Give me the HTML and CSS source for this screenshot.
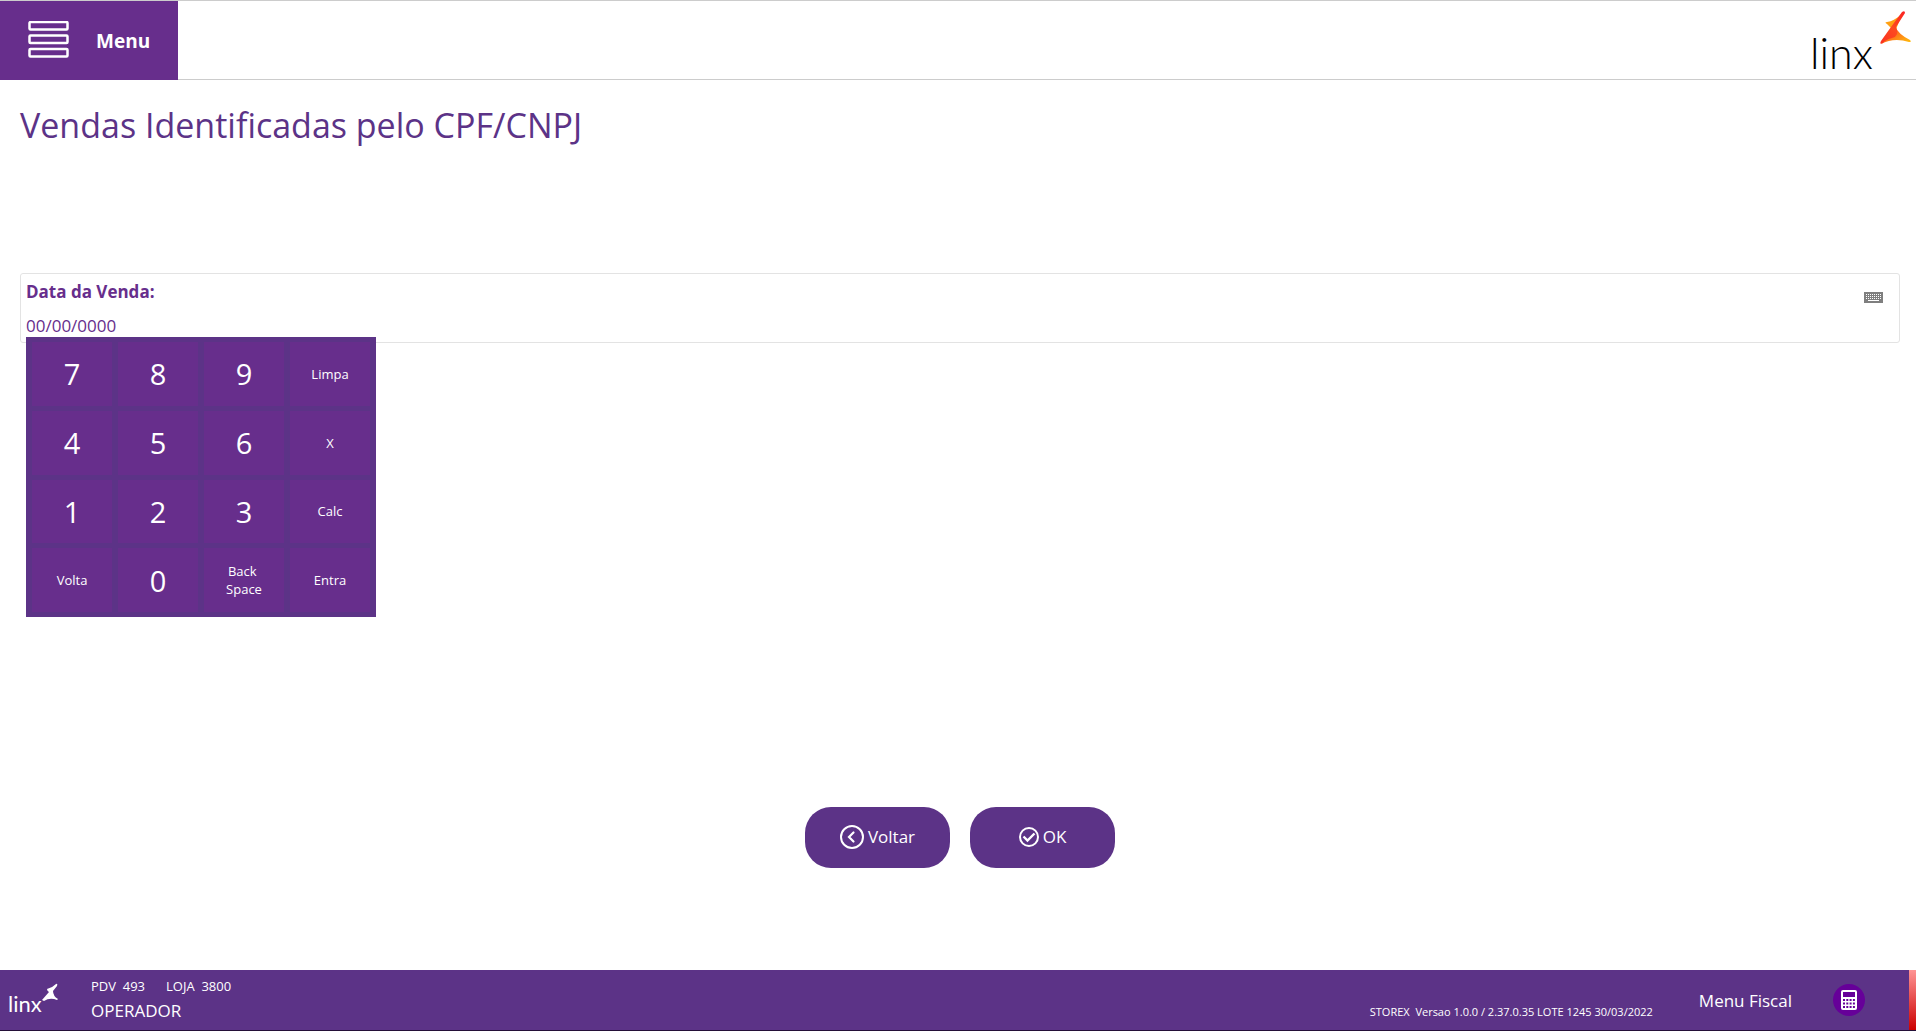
FILE: index.html
```html
<!DOCTYPE html>
<html lang="pt-BR">
<head>
<meta charset="utf-8">
<title>Vendas Identificadas pelo CPF/CNPJ</title>
<link rel="stylesheet" href="styles.css">
</head>
<body>
<header class="topbar">
  <button class="menu" type="button">
    <svg class="menu-icon" width="42" height="38" viewBox="0 0 42 38" fill="none" stroke="#fff" stroke-width="2.500" aria-hidden="true">
      <rect x="1.500" y="1" width="38" height="7.500" rx="1"/>
      <rect x="1.500" y="14.500" width="38" height="7.500" rx="1"/>
      <rect x="1.500" y="28" width="38" height="7.500" rx="1"/>
    </svg>
    <span>Menu</span>
  </button>
  <svg class="brand" width="106" height="72" viewBox="0 0 106 72" role="img" aria-label="Linx">
    <defs>
      <linearGradient id="wing" x1="0" y1="0" x2="1" y2="1"><stop offset=".3" stop-color="#fd5a20"/><stop offset="1" stop-color="#ffc60b"/></linearGradient>
      <linearGradient id="body" x1="1" y1="0" x2="0" y2="1"><stop offset="0" stop-color="#fb2222"/><stop offset=".5" stop-color="#fd4a20"/><stop offset="1" stop-color="#fb3020"/></linearGradient>
    </defs>
    <text class="brand-text" x="0" y="62">linx</text>
    <path d="M77 17 Q74 15 77 15 Q84 14 92 7 L85 25Z" fill="#ffa012"/>
    <path d="M85 19 Q88 27 100 33 Q102 35 99 35 Q84 30 71 37Z" fill="url(#wing)"/>
    <path d="M92 5 Q95 3 95 6 L86 20 Q90 29 82 31 Q75 33 73 36 Q69 38 71 34 L81 20Z" fill="url(#body)"/>
  </svg>
</header>

<main class="content">
  <h1 class="title">Vendas Identificadas pelo CPF/CNPJ</h1>
  <div class="field">
    <div class="field-main">
      <label class="field-label" for="data">Data da Venda:</label>
      <input class="field-input" id="data" type="text" value="00/00/0000">
    </div>
    <button class="keyboard" type="button" aria-label="Teclado">
      <svg width="19" height="11" viewBox="0 0 19 11" aria-hidden="true">
        <path fill="#7f7f7f" d="M0 0h19v11H0z"/>
        <path stroke="#fff" stroke-dasharray="1 1" d="M2 2.500h15M2 4.500h15M2 6.500h15"/>
        <path stroke="#fff" d="M4 8.500h11"/>
      </svg>
    </button>
    <div class="keypad">
      <button class="key" type="button">7</button>
      <button class="key" type="button">8</button>
      <button class="key" type="button">9</button>
      <button class="key key-word" type="button">Limpa</button>
      <button class="key" type="button">4</button>
      <button class="key" type="button">5</button>
      <button class="key" type="button">6</button>
      <button class="key key-word" type="button">X</button>
      <button class="key" type="button">1</button>
      <button class="key" type="button">2</button>
      <button class="key" type="button">3</button>
      <button class="key key-word" type="button">Calc</button>
      <button class="key key-word" type="button">Volta</button>
      <button class="key" type="button">0</button>
      <button class="key key-word" type="button">Back&nbsp;<br>Space</button>
      <button class="key key-word" type="button">Entra</button>
    </div>
  </div>
  <div class="actions">
    <button class="action" type="button">
      <svg width="24" height="24" viewBox="0 0 24 24" fill="none" stroke="#fff" stroke-width="2" aria-hidden="true">
        <circle cx="12" cy="12" r="11"/><path d="M13.500 7.500 9 12l4.500 4.500" stroke-width="2.200" stroke-linecap="round"/>
      </svg>
      <span>Voltar</span>
    </button>
    <button class="action" type="button">
      <svg width="20" height="20" viewBox="0 0 20 20" fill="none" stroke="#fff" stroke-width="2" aria-hidden="true">
        <circle cx="10" cy="10" r="9"/><path d="M4.500 9.500 8.500 13.500 15.500 6.500" stroke-width="2.400"/>
      </svg>
      <span>OK</span>
    </button>
  </div>
</main>

<footer class="status">
  <svg class="status-logo" width="52" height="40" viewBox="0 0 52 40" role="img" aria-label="Linx">
    <text class="status-logo-text" x="0" y="32">linx</text>
    <path fill="#fff" d="M48 4 Q50 3 49 6 L45 11 Q45 16 50 19 L49 20 Q42 17 36 21 L34 20 L41 12 Q39 11 39 9 Q44 8 48 4Z"/>
  </svg>
  <div class="station">
    <div class="station-ids"><span>PDV&nbsp; 493</span><span>LOJA&nbsp; 3800</span></div>
    <div class="operator">OPERADOR</div>
  </div>
  <div class="version">STOREX&nbsp; Versao 1.0.0 / 2.37.0.35 LOTE 1245 30/03/2022</div>
  <a class="fiscal" href="#">Menu Fiscal</a>
  <button class="calc" type="button" aria-label="Calculadora">
    <svg width="16" height="20" viewBox="0 0 16 20" aria-hidden="true">
      <rect width="16" height="20" rx="2" fill="#fff"/>
      <path fill="#609" d="M2 2h12v5H2z"/>
      <path stroke="#609" stroke-width="2" stroke-dasharray="2 1.300" d="M2 10h12M2 13.500h12M2 17h12"/>
    </svg>
  </button>
  <span class="alert-strip"></span>
</footer>
</body>
</html>
```
FILE: styles.css
```css
* { box-sizing: border-box; }

body {
  margin: 0;
  min-height: 100vh;
  display: flex;
  flex-direction: column;
  background: #fff;
  color: #5c3387;
  font-family: "Open Sans", "Noto Sans", sans-serif;
}

button {
  margin: 0;
  padding: 0;
  border: 0;
  background: none;
  color: #fff;
  font: inherit;
}

.topbar {
  display: flex;
  justify-content: space-between;
  height: 80px;
  border-top: 1px solid #ccc;
  box-shadow: inset 0 -1px #ccc;
}

.menu {
  display: flex;
  align-items: center;
  gap: 26px;
  width: 178px;
  padding-left: 28px;
  background: #672e8c;
  font-size: 19px;
  font-weight: 700;
}

.menu-icon { margin-bottom: 2px; }

.brand { margin-top: 6px; }

.brand-text {
  font-family: Lato, sans-serif;
  font-size: 43px;
  font-weight: 300;
  fill: #000;
}

.content {
  flex: 1;
  display: flex;
  flex-direction: column;
  padding: 19px 16px 102px 20px;
}

.title {
  margin: 0;
  font-size: 34px;
  font-weight: 400;
  line-height: 52px;
}

.field {
  position: relative;
  display: flex;
  justify-content: space-between;
  align-items: flex-start;
  height: 70px;
  margin-top: 122px;
  padding: 4px 16px 0 5px;
  border: 1px solid #e3e3e3;
  border-radius: 3px;
  color: #672e8c;
}

.field-main {
  flex: 1;
  display: flex;
  flex-direction: column;
}

.field-label {
  font-size: 17px;
  font-weight: 700;
  line-height: 28px;
}

.field-input {
  height: 32px;
  padding: 6px 0 0;
  border: 0;
  outline: 0;
  background: none;
  color: inherit;
  font: 17px/26px "Open Sans", "Noto Sans", sans-serif;
}

.keyboard {
  display: flex;
  margin-top: 14px;
}

.keypad {
  position: absolute;
  top: 63px;
  left: 5px;
  display: grid;
  grid-template-columns: repeat(4, 80px);
  grid-auto-rows: 1fr;
  gap: 5px 6px;
  width: 350px;
  height: 280px;
  padding: 5px 6px;
  background: #5c3387;
}

.key {
  background: #672e8c;
  font-size: 29px;
}

.key-word {
  font-size: 13px;
  line-height: 18px;
}

.actions {
  display: flex;
  justify-content: center;
  gap: 20px;
  margin-top: auto;
}

.action {
  display: flex;
  align-items: center;
  justify-content: center;
  gap: 4px;
  width: 145px;
  height: 61px;
  padding-bottom: 2px;
  border-radius: 26px;
  background: #5c3387;
  font-size: 17px;
}

.status {
  display: flex;
  align-items: center;
  height: 61px;
  padding-left: 8px;
  border-bottom: 1px solid #241038;
  background: #5c3387;
  color: #fff;
}

.status-logo-text {
  font-family: Lato, sans-serif;
  font-size: 22px;
  font-weight: 400;
  fill: #fff;
}

.station { margin-left: 31px; }

.station-ids {
  display: flex;
  gap: 21px;
  font-size: 13px;
  line-height: 22px;
}

.operator {
  font-size: 17px;
  line-height: 28px;
}

.version {
  margin: 22px 46px 0 auto;
  font-size: 11px;
}

.fiscal {
  color: #fff;
  font-size: 17px;
  text-decoration: none;
}

.calc {
  display: flex;
  align-items: center;
  justify-content: center;
  width: 32px;
  height: 32px;
  margin: 0 44px 0 41px;
  border-radius: 50%;
  background: #609;
}

.alert-strip {
  align-self: stretch;
  width: 7px;
  background: linear-gradient(#ff9494, #c00);
}
```
